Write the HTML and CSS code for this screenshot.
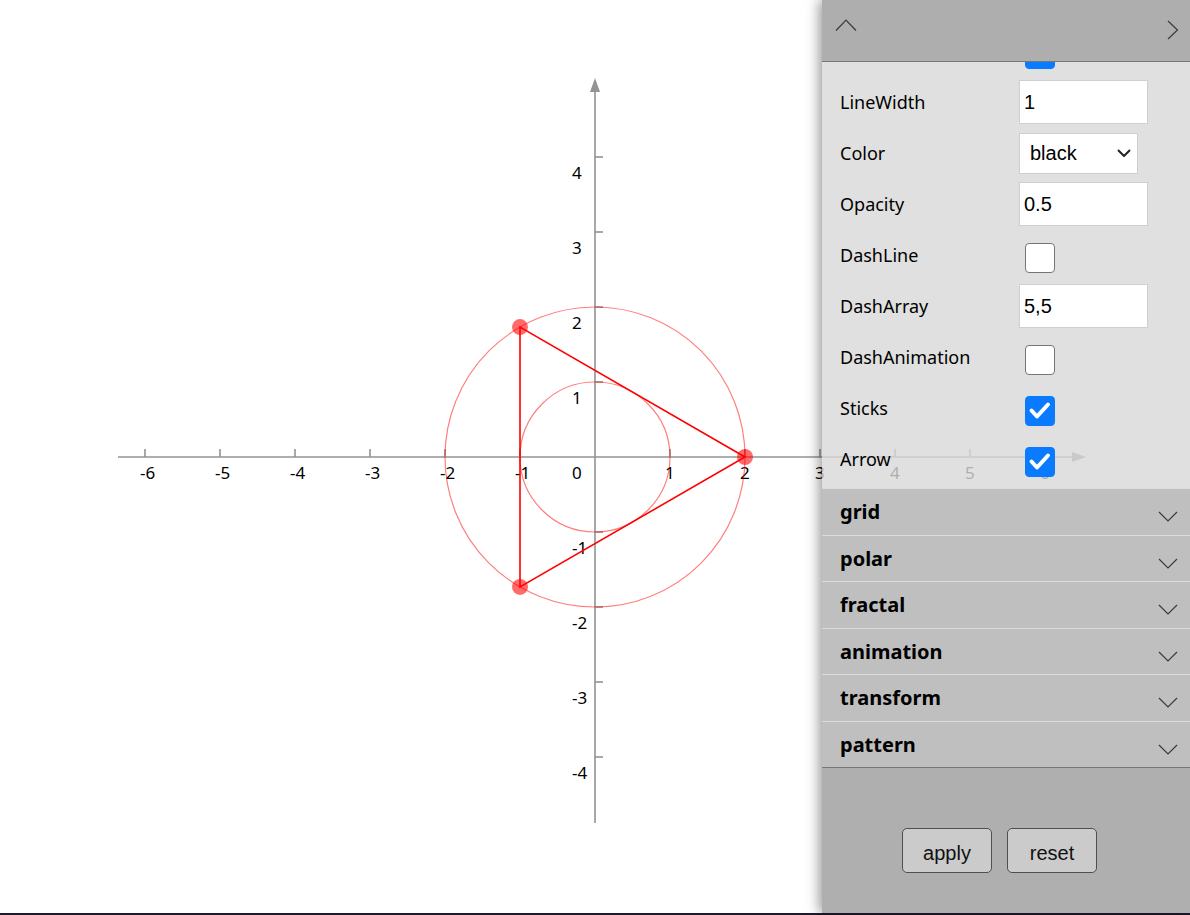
FILE: index.html
```html
<!DOCTYPE html>
<html lang="en">
<head>
<meta charset="utf-8">
<title>Plot</title>
<link rel="stylesheet" href="styles.css">
</head>
<body>
<div class="screen">
  <main class="stage">
    <svg class="plot" viewBox="0 0 1190 913" width="1190" height="913">
      <g class="axis">
        <line x1="118" y1="457" x2="1074" y2="457"/>
        <path class="arrow" d="M1086 457 L1072 452 L1072 462 Z"/>
        <line x1="595" y1="823" x2="595" y2="90"/>
        <path class="arrow" d="M595 78 L590 92 L600 92 Z"/>
        <line x1="145" y1="449" x2="145" y2="457"/>
        <line x1="220" y1="449" x2="220" y2="457"/>
        <line x1="295" y1="449" x2="295" y2="457"/>
        <line x1="370" y1="449" x2="370" y2="457"/>
        <line x1="445" y1="449" x2="445" y2="457"/>
        <line x1="520" y1="449" x2="520" y2="457"/>
        <line x1="670" y1="449" x2="670" y2="457"/>
        <line x1="745" y1="449" x2="745" y2="457"/>
        <line x1="820" y1="449" x2="820" y2="457"/>
        <line x1="895" y1="449" x2="895" y2="457"/>
        <line x1="970" y1="449" x2="970" y2="457"/>
        <line x1="1045" y1="449" x2="1045" y2="457"/>
        <line x1="595" y1="157" x2="603" y2="157"/>
        <line x1="595" y1="232" x2="603" y2="232"/>
        <line x1="595" y1="307" x2="603" y2="307"/>
        <line x1="595" y1="382" x2="603" y2="382"/>
        <line x1="595" y1="532" x2="603" y2="532"/>
        <line x1="595" y1="607" x2="603" y2="607"/>
        <line x1="595" y1="682" x2="603" y2="682"/>
        <line x1="595" y1="757" x2="603" y2="757"/>
      </g>
      <g class="labels">
        <text x="140" y="479">-6</text>
        <text x="215" y="479">-5</text>
        <text x="290" y="479">-4</text>
        <text x="365" y="479">-3</text>
        <text x="440" y="479">-2</text>
        <text x="515" y="479">-1</text>
        <text x="572" y="479">0</text>
        <text x="665" y="479">1</text>
        <text x="740" y="479">2</text>
        <text x="815" y="479">3</text>
        <text x="890" y="479">4</text>
        <text x="965" y="479">5</text>
        <text x="1040" y="479">6</text>
        <text x="572" y="179">4</text>
        <text x="572" y="254">3</text>
        <text x="572" y="329">2</text>
        <text x="572" y="404">1</text>
        <text x="572" y="554">-1</text>
        <text x="572" y="629">-2</text>
        <text x="572" y="704">-3</text>
        <text x="572" y="779">-4</text>
      </g>
      <g class="shape">
        <circle class="ring" cx="595" cy="457" r="150"/>
        <circle class="ring" cx="595" cy="457" r="75"/>
        <polygon class="tri" points="745,457 520,327.1 520,586.9"/>
        <circle class="pt" cx="745" cy="457" r="8"/>
        <circle class="pt" cx="520" cy="327.1" r="8"/>
        <circle class="pt" cx="520" cy="586.9" r="8"/>
      </g>
    </svg>

    <aside class="panel">
      <div class="panel-head">
        <svg class="ico-up" width="22" height="12" viewBox="0 0 22 12"><path d="M1 11.5 L11 1.2 L21 11.5"/></svg>
        <svg class="ico-right" width="12" height="20" viewBox="0 0 12 20"><path d="M1 1 L10.5 10 L1 19"/></svg>
      </div>
      <div class="panel-body">
        <div class="rows">
          <div class="row"><span class="label"></span><input class="check" type="checkbox" checked></div>
          <div class="row"><span class="label">LineWidth</span><input class="field" type="text" value="1"></div>
          <div class="row"><span class="label">Color</span><select class="pick"><option>black</option></select></div>
          <div class="row"><span class="label">Opacity</span><input class="field" type="text" value="0.5"></div>
          <div class="row"><span class="label">DashLine</span><input class="check" type="checkbox"></div>
          <div class="row"><span class="label">DashArray</span><input class="field" type="text" value="5,5"></div>
          <div class="row"><span class="label">DashAnimation</span><input class="check" type="checkbox"></div>
          <div class="row"><span class="label">Sticks</span><input class="check" type="checkbox" checked></div>
          <div class="row"><span class="label">Arrow</span><input class="check" type="checkbox" checked></div>
        </div>
      </div>
      <div class="section"><span>grid</span><svg class="ico-down" width="20" height="11" viewBox="0 0 20 11"><path d="M1 1 L10 10 L19 1"/></svg></div>
      <div class="section"><span>polar</span><svg class="ico-down" width="20" height="11" viewBox="0 0 20 11"><path d="M1 1 L10 10 L19 1"/></svg></div>
      <div class="section"><span>fractal</span><svg class="ico-down" width="20" height="11" viewBox="0 0 20 11"><path d="M1 1 L10 10 L19 1"/></svg></div>
      <div class="section"><span>animation</span><svg class="ico-down" width="20" height="11" viewBox="0 0 20 11"><path d="M1 1 L10 10 L19 1"/></svg></div>
      <div class="section"><span>transform</span><svg class="ico-down" width="20" height="11" viewBox="0 0 20 11"><path d="M1 1 L10 10 L19 1"/></svg></div>
      <div class="section last"><span>pattern</span><svg class="ico-down" width="20" height="11" viewBox="0 0 20 11"><path d="M1 1 L10 10 L19 1"/></svg></div>
      <div class="panel-foot">
        <button class="btn" type="button">apply</button>
        <button class="btn" type="button">reset</button>
      </div>
    </aside>
  </main>
  <div class="edge"></div>
</div>
</body>
</html>
```

FILE: styles.css
```css
html, body {
  margin: 0;
  padding: 0;
  background: #ffffff;
  overflow: hidden;
}

.screen {
  height: 915px;
  display: flex;
  flex-direction: column;
}

.stage {
  position: relative;
  height: 913px;
  flex: none;
}

.edge {
  height: 2px;
  background: #1e1a28;
}

.plot {
  display: block;
  width: 1190px;
  height: 913px;
}

.axis line {
  stroke: #939393;
  stroke-width: 1.6;
}

.axis .arrow {
  fill: #939393;
}

.labels text {
  font-family: "Noto Sans", "DejaVu Sans", sans-serif;
  font-size: 17px;
  fill: #000;
}

.ring {
  fill: none;
  stroke: #ff0000;
  stroke-opacity: 0.5;
  stroke-width: 1.2;
}

.tri {
  fill: none;
  stroke: #ff0000;
  stroke-width: 1.6;
}

.pt {
  fill: #ff0000;
  fill-opacity: 0.58;
}

/* panel */
.panel {
  position: absolute;
  top: 0;
  right: 0;
  width: 368px;
  height: 913px;
  display: flex;
  flex-direction: column;
  box-shadow: -3px 0 12px rgba(0, 0, 0, 0.4);
  font-family: "Noto Sans", "DejaVu Sans", sans-serif;
  color: #000;
}

.panel-head {
  box-sizing: border-box;
  height: 62px;
  flex: none;
  border-bottom: 1px solid #777;
  background: #aeaeae;
  display: flex;
  justify-content: space-between;
  align-items: flex-start;
  padding: 19px 11px 0 13px;
}

.panel-head svg path,
.section svg path {
  fill: none;
  stroke: #3a3a3a;
  stroke-width: 1.2;
}

.ico-right {
  margin-top: 1px;
}

.panel-body {
  height: 426px;
  flex: none;
  overflow: hidden;
  background: rgba(216, 216, 216, 0.8);
}

.rows {
  margin-top: -36.5px;
}

.row {
  height: 51px;
  display: grid;
  grid-template-columns: 179px 1fr;
  align-items: center;
  padding-left: 18px;
}

.label {
  font-size: 18px;
  line-height: 1;
}

.field {
  box-sizing: border-box;
  width: 129px;
  height: 44px;
  margin: 0;
  border: 1px solid #cfcfcf;
  border-radius: 0;
  padding: 0 4px;
  background: #fff;
  font-family: "Liberation Sans", Arial, sans-serif;
  font-size: 20px;
  color: #000;
  outline: none;
}

.pick {
  box-sizing: border-box;
  width: 119px;
  height: 41px;
  margin: 0;
  border: 1px solid #cfcfcf;
  border-radius: 0;
  padding: 0 0 0 10px;
  appearance: none;
  -webkit-appearance: none;
  background-color: #fff;
  background-image: url("data:image/svg+xml,%3Csvg xmlns='http://www.w3.org/2000/svg' width='14' height='8' viewBox='0 0 14 8'%3E%3Cpath d='M1 1 L7 7 L13 1' fill='none' stroke='%23222' stroke-width='2'/%3E%3C/svg%3E");
  background-repeat: no-repeat;
  background-position: right 6px center;
  font-family: "Liberation Sans", Arial, sans-serif;
  font-size: 20px;
  color: #000;
}

.check {
  appearance: none;
  -webkit-appearance: none;
  box-sizing: border-box;
  width: 30px;
  height: 30px;
  margin: 6px 0 0 6px;
  border: 1px solid #767676;
  border-radius: 4px;
  background: #fff;
}

.check:checked {
  border-color: #0a7bff;
  background-color: #0a7bff;
  background-image: url("data:image/svg+xml,%3Csvg xmlns='http://www.w3.org/2000/svg' width='30' height='30' viewBox='0 0 30 30'%3E%3Cpath d='M6.5 14.5 L12 20.5 L23 8.5' fill='none' stroke='white' stroke-width='4' stroke-linecap='round' stroke-linejoin='round'/%3E%3C/svg%3E");
  background-position: -1px -1px;
  background-repeat: no-repeat;
}

.section {
  box-sizing: border-box;
  height: 46.5px;
  flex: none;
  border-top: 1px solid #dcdcdc;
  background: #bfbfbf;
  display: flex;
  align-items: center;
  justify-content: space-between;
  padding: 0 12px 0 18px;
  font-size: 20px;
  font-weight: 700;
}

.section svg {
  margin-top: 10px;
}

.section.last {
  height: 47.5px;
  border-bottom: 1px solid #767676;
}

.panel-foot {
  flex: 1;
  background: #afafaf;
  display: flex;
  align-items: flex-start;
  gap: 15px;
  padding: 60px 0 0 80px;
}

.btn {
  box-sizing: border-box;
  width: 90px;
  height: 45px;
  margin: 0;
  border: 1px solid #4f4f4f;
  border-radius: 5px;
  background: #cbcbcb;
  font-family: "Liberation Sans", Arial, sans-serif;
  font-size: 20px;
  color: #111;
  padding: 6px 0 0;
}
```
